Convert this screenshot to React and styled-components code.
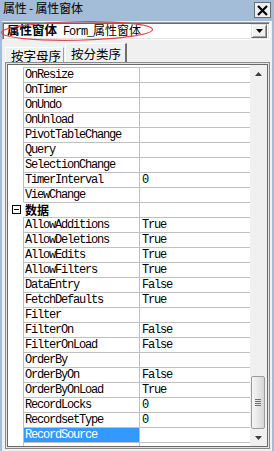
import React from 'react';
import styled, { createGlobalStyle } from 'styled-components';

const CJK = `"Noto Sans CJK SC", "Liberation Sans", sans-serif`;
const MONO = `"Liberation Mono", "Noto Sans CJK SC", monospace`;

const rows = [
  { name: 'OnResize' },
  { name: 'OnTimer' },
  { name: 'OnUndo' },
  { name: 'OnUnload' },
  { name: 'PivotTableChange' },
  { name: 'Query' },
  { name: 'SelectionChange' },
  { name: 'TimerInterval', value: '0' },
  { name: 'ViewChange' },
  { category: '数据' },
  { name: 'AllowAdditions', value: 'True' },
  { name: 'AllowDeletions', value: 'True' },
  { name: 'AllowEdits', value: 'True' },
  { name: 'AllowFilters', value: 'True' },
  { name: 'DataEntry', value: 'False' },
  { name: 'FetchDefaults', value: 'True' },
  { name: 'Filter' },
  { name: 'FilterOn', value: 'False' },
  { name: 'FilterOnLoad', value: 'False' },
  { name: 'OrderBy' },
  { name: 'OrderByOn', value: 'False' },
  { name: 'OrderByOnLoad', value: 'True' },
  { name: 'RecordLocks', value: '0' },
  { name: 'RecordsetType', value: '0' },
  { name: 'RecordSource', selected: true },
  { name: '' },
];

const App = () => (
  <>
    <GlobalStyle />
    <Window>
      <TitleBar>
        <Title>属性 - 属性窗体</Title>
        <CloseButton>
          <svg width="11" height="11" viewBox="0 0 11 11">
            <path d="M1 1 L10 10 M10 1 L1 10" stroke="#000" strokeWidth="2.2" />
          </svg>
        </CloseButton>
      </TitleBar>

      <Body>
        <Combo>
          <ComboText>
            <ObjName>属性窗体</ObjName>
            <Mono> Form_</Mono>属性窗体
          </ComboText>
          <DropButton>
            <svg width="7" height="4" viewBox="0 0 7 4">
              <path d="M0 0 H7 L3.5 4 Z" fill="#000" />
            </svg>
          </DropButton>
        </Combo>

        <Tabs>
          <Tab>按字母序</Tab>
          <Tab $active>按分类序</Tab>
        </Tabs>

        <Frame>
          <Inner>
            <List>
              {rows.map((r, i) =>
                r.category ? (
                  <Row key={i}>
                    <Gutter>
                      <Collapse>
                        <svg width="9" height="9" viewBox="0 0 9 9">
                          <rect x="0.5" y="0.5" width="8" height="8" fill="#fff" stroke="#000" />
                          <path d="M2 4.5 H7" stroke="#000" />
                        </svg>
                      </Collapse>
                    </Gutter>
                    <CategoryCell>{r.category}</CategoryCell>
                    <ValueCell />
                  </Row>
                ) : (
                  <Row key={i}>
                    <Gutter />
                    <NameCell $selected={r.selected}>{r.name}</NameCell>
                    <ValueCell>{r.value}</ValueCell>
                  </Row>
                )
              )}
            </List>
            <ScrollBar>
              <ArrowButton>
                <svg width="7" height="4" viewBox="0 0 7 4">
                  <path d="M3.5 0 L7 4 H0 Z" fill="#3c3c3c" />
                </svg>
              </ArrowButton>
              <Track />
              <Thumb>
                <Grip />
                <Grip />
                <Grip />
                <Grip />
              </Thumb>
              <ArrowButton>
                <svg width="7" height="4" viewBox="0 0 7 4">
                  <path d="M0 0 H7 L3.5 4 Z" fill="#3c3c3c" />
                </svg>
              </ArrowButton>
            </ScrollBar>
          </Inner>
        </Frame>
      </Body>

      <Highlight width="158" height="24" viewBox="0 0 158 24">
        <ellipse
          cx="77"
          cy="11"
          rx="75.5"
          ry="9.2"
          fill="none"
          stroke="#e0444c"
          strokeWidth="1.1"
          transform="rotate(-1.2 77 11)"
        />
      </Highlight>
    </Window>
  </>
);

const GlobalStyle = createGlobalStyle`
  html, body {
    margin: 0;
    padding: 0;
  }
  body {
    width: 274px;
    height: 451px;
    overflow: hidden;
    background: #f0f0f0;
  }
`;

const Window = styled.div`
  position: relative;
  width: 274px;
  height: 451px;
  background: #a3bcd8;
  display: flex;
  flex-direction: column;
  font-family: ${CJK};
`;

const TitleBar = styled.div`
  height: 21px;
  display: flex;
  justify-content: space-between;
  align-items: flex-start;
  padding: 0 3px 0 3px;
  box-sizing: border-box;
`;

const Title = styled.div`
  font-size: 12px;
  line-height: 16px;
  color: #000;
  letter-spacing: -0.2px;
`;

const CloseButton = styled.div`
  margin-top: 2px;
  width: 17px;
  height: 16px;
  box-sizing: border-box;
  border: 1px solid #6c6c6c;
  background: #edf0f4;
  display: flex;
  align-items: center;
  justify-content: center;
`;

const Body = styled.div`
  flex: 1;
  margin: 0 2px;
  background: #f0f0f0;
  display: flex;
  flex-direction: column;
  min-height: 0;
`;

const Combo = styled.div`
  margin: 1px 0 0 0;
  width: 268px;
  height: 18px;
  box-sizing: border-box;
  background: #fff;
  border-top: 1px solid #a0a0a0;
  border-left: 1px solid #a0a0a0;
  border-right: 1px solid #fff;
  border-bottom: 1px solid #fff;
  box-shadow: inset 1px 1px 0 #696969, inset -1px -1px 0 #e3e3e3;
  display: flex;
  align-items: center;
  justify-content: space-between;
  padding: 0 2px 0 4px;
`;

const ComboText = styled.div`
  font-size: 12px;
  line-height: 14px;
  color: #000;
  white-space: nowrap;
`;

const ObjName = styled.span`
  font-weight: bold;
  font-size: 12.5px;
`;

const Mono = styled.span`
  font-family: ${MONO};
  font-size: 12px;
  letter-spacing: -1.2px;
  white-space: pre;
`;

const DropButton = styled.div`
  width: 16px;
  height: 14px;
  box-sizing: border-box;
  background: #f0f0f0;
  border-top: 1px solid #e3e3e3;
  border-left: 1px solid #e3e3e3;
  border-right: 1px solid #696969;
  border-bottom: 1px solid #696969;
  box-shadow: inset 1px 1px 0 #fff, inset -1px -1px 0 #a0a0a0;
  display: flex;
  align-items: center;
  justify-content: center;
`;

const Tabs = styled.div`
  height: 22px;
  display: flex;
  align-items: flex-end;
  padding-left: 3px;
`;

const Tab = styled.div`
  height: ${(p) => (p.$active ? '19px' : '15px')};
  box-sizing: border-box;
  padding: ${(p) => (p.$active ? '1px 4px 0 5px' : '0 2px 0 5px')};
  margin-left: ${(p) => (p.$active ? '1px' : '0')};
  font-size: 12.5px;
  line-height: ${(p) => (p.$active ? '17px' : '15px')};
  color: #000;
  background: #f0f0f0;
  border-top: 1px solid #fff;
  border-left: 1px solid #fff;
  border-right: ${(p) => (p.$active ? '2px solid #6f6f6f' : '1px solid #a0a0a0')};
  white-space: nowrap;
`;

const Frame = styled.div`
  flex: 1;
  min-height: 0;
  margin: 0 2px 2px 3px;
  border: 1px solid #8a8a8a;
  padding: 1px;
  background: #e4e4e4;
  display: flex;
`;

const Inner = styled.div`
  flex: 1;
  min-width: 0;
  border: 1px solid #6a6a6a;
  background: #fff;
  display: flex;
  overflow: hidden;
`;

const List = styled.div`
  flex: 1;
  padding-top: 2px;
  overflow: hidden;
`;

const Row = styled.div`
  display: flex;
  height: 15px;
`;

const Gutter = styled.div`
  width: 15px;
  flex: none;
  background: #fff;
`;

const Collapse = styled.div`
  padding: 3px 0 0 4px;
  line-height: 0;
`;

const NameCell = styled.div`
  width: 116px;
  flex: none;
  box-sizing: border-box;
  border-top: 1px solid #c0c0c0;
  border-left: 1px solid #c0c0c0;
  padding-left: 1px;
  font-family: ${MONO};
  font-size: 12px;
  letter-spacing: -1.2px;
  line-height: 14px;
  white-space: pre;
  overflow: hidden;
  color: ${(p) => (p.$selected ? '#fff' : '#000')};
  background: ${(p) => (p.$selected ? '#3399ff' : '#fff')};
`;

const CategoryCell = styled.div`
  width: 116px;
  flex: none;
  box-sizing: border-box;
  border-top: 1px solid #c0c0c0;
  border-left: 1px solid transparent;
  padding-left: 1px;
  font-size: 12px;
  font-weight: bold;
  line-height: 14px;
  color: #000;
`;

const ValueCell = styled.div`
  flex: 1;
  box-sizing: border-box;
  border-top: 1px solid #c0c0c0;
  border-left: 1px solid #c0c0c0;
  padding-left: 2px;
  font-family: ${MONO};
  font-size: 12px;
  letter-spacing: -1.2px;
  line-height: 14px;
  white-space: pre;
  color: #000;
`;

const ScrollBar = styled.div`
  width: 17px;
  flex: none;
  background: #f0f0f0;
  display: flex;
  flex-direction: column;
`;

const ArrowButton = styled.div`
  height: 17px;
  flex: none;
  display: flex;
  align-items: center;
  justify-content: center;
`;

const Track = styled.div`
  flex: 1;
`;

const Thumb = styled.div`
  height: 53px;
  margin: 0 2px 0 1px;
  box-sizing: border-box;
  border: 1px solid #9c9c9c;
  border-radius: 2px;
  background: linear-gradient(to right, #f6f6f6, #e4e4e4 60%, #d6d6d6);
  display: flex;
  flex-direction: column;
  align-items: center;
  justify-content: center;
  gap: 1px;
`;

const Grip = styled.div`
  width: 6px;
  height: 1px;
  background: #6e6e6e;
`;

const Highlight = styled.svg`
  position: absolute;
  left: 0;
  top: 20px;
  pointer-events: none;
`;

export default App;
